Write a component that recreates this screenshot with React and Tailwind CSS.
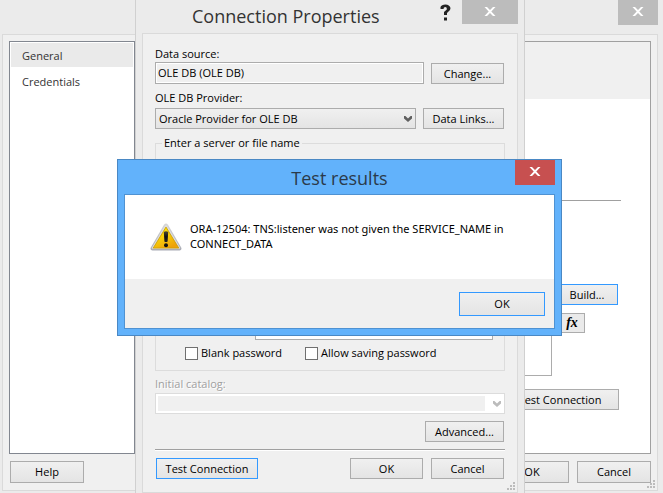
import React from "react";

const BUTTON =
  "border border-[#acacac] bg-linear-to-b from-[#f0f0f0] to-[#e4e4e4] text-center text-black";
const FOCUS_BUTTON =
  "border border-[#3399ff] bg-linear-to-b from-[#f0f0f0] to-[#e4e4e4] text-center text-black";

function CloseIcon() {
  return (
    <svg width="12" height="9" viewBox="0 0 12 9" aria-hidden="true">
      <path d="M0.5 0H3L6 3L9 0H11.5L7.3 4.5L11.5 9H9L6 6L3 9H0.5L4.7 4.5Z" fill="#fff" />
    </svg>
  );
}

function Chevron({ color }) {
  return (
    <svg width="8" height="6" viewBox="0 0 8 6" aria-hidden="true">
      <path d="M0 0H1.4L4 2.4L6.6 0H8V2.4L4 6L0 2.4Z" fill={color} />
    </svg>
  );
}

function Grip() {
  return (
    <svg width="8" height="8" viewBox="0 0 8 8" aria-hidden="true" fill="#bcbcbc">
      <path d="M6 0h2v2H6zM3 3h2v2H3zM6 3h2v2H6zM0 6h2v2H0zM3 6h2v2H3zM6 6h2v2H6z" />
    </svg>
  );
}

function WarningIcon() {
  return (
    <svg className="mt-0.5 shrink-0" width="32" height="28" viewBox="0 0 32 29" preserveAspectRatio="none" aria-hidden="true">
      <defs>
        <linearGradient id="rim" x1="0" y1="0" x2="0" y2="1">
          <stop offset="0" stopColor="#d6d6d6" />
          <stop offset="1" stopColor="#a9abb5" />
        </linearGradient>
        <linearGradient id="face" x1="0" y1="0" x2="0.6" y2="1">
          <stop offset="0" stopColor="#fff200" />
          <stop offset="0.5" stopColor="#f7d10a" />
          <stop offset="1" stopColor="#eea20a" />
        </linearGradient>
        <linearGradient id="mark" x1="0" y1="0" x2="0" y2="1">
          <stop offset="0" stopColor="#4a4630" />
          <stop offset="0.5" stopColor="#111" />
          <stop offset="1" stopColor="#222" />
        </linearGradient>
      </defs>
      <path d="M14 1.8Q16 -0.8 18 1.8L31.3 25.6Q32 28.3 29.5 28.5H2.5Q0 28.3 0.7 25.6Z" fill="url(#rim)" />
      <path d="M14.7 3Q16 1 17.3 3L30 25.4Q30.4 26.8 29 27H3Q1.6 26.8 2 25.4Z" fill="#dedede" />
      <path d="M16 4.2L28.8 26H3.2Z" fill="url(#face)" stroke="#c99a00" strokeWidth="0.8" strokeLinejoin="round" />
      <path d="M13.8 9.4Q16 7.8 18.2 9.4L17.6 19.2Q16 20.4 14.4 19.2Z" fill="url(#mark)" />
      <circle cx="16" cy="23" r="2" fill="#111" />
    </svg>
  );
}

function PropertiesWindow() {
  return (
    <main className="flex min-h-screen flex-col bg-[#ebebeb] pr-[5px] pb-0.5 pl-0.5">
      <header className="flex h-[34px] shrink-0 items-start justify-end">
        <button type="button" aria-label="Close window" className="flex h-[25px] w-10 items-center justify-center bg-[#bcbcbc] pb-0.5">
          <CloseIcon />
        </button>
      </header>
      <div className="flex flex-1 flex-col border border-[#dadada] bg-[#f0f0f0] px-1.5 pt-1.5">
        <div className="flex flex-1">
          <nav className="w-[126px] border border-[#828790] bg-white p-px text-[#333]">
            <button type="button" className="block h-6 w-full bg-[#eaeaea] pt-0.5 pl-[11px] text-left">General</button>
            <button type="button" className="mt-0.5 block h-6 w-full pt-0.5 pl-[11px] text-left">Credentials</button>
          </nav>
          <section className="ml-2 flex flex-1 flex-col border border-[#a0a0a0] bg-white">
            <div className="h-[57px] bg-[#f0f0f0]" />
            <div className="mr-[29px] ml-4 flex flex-col items-end pt-[101px]">
              <hr className="w-full border-t border-[#a0a0a0]" />
              <button type="button" className={`mt-[83px] mr-[3px] h-[21px] w-[74px] pl-3 ${FOCUS_BUTTON}`}>Build...</button>
              <div className="mt-2 mr-9 flex w-full items-start justify-end gap-[7px]">
                <textarea aria-label="Connection string" className="ml-9 h-[63px] flex-1 resize-none border border-[#acacac] bg-white" />
                <button
                  type="button"
                  aria-label="Expression"
                  className="flex h-5 w-[26px] items-center justify-center border border-[#acacac] bg-[#eaeaea] font-['Liberation_Serif',serif] text-sm leading-4 font-bold text-black italic"
                >
                  fx
                </button>
              </div>
              <button type="button" className={`mt-[13px] mr-0.5 h-[21px] w-[118px] ${BUTTON}`}>Test Connection</button>
            </div>
          </section>
        </div>
        <footer className="flex gap-2 pt-[7px] pb-[7px] pl-px">
          <button type="button" className={`mr-auto h-[22px] w-[74px] ${BUTTON}`}>Help</button>
          <button type="button" className={`h-[22px] w-[74px] ${BUTTON}`}>OK</button>
          <button type="button" className={`h-[22px] w-[74px] ${BUTTON}`}>Cancel</button>
        </footer>
        <div className="absolute right-2 bottom-[5px]">
          <Grip />
        </div>
      </div>
    </main>
  );
}

function ConnectionDialog() {
  return (
    <section aria-label="Connection Properties" className="absolute inset-y-0 left-[135px] flex w-[390px] flex-col border-x border-[#d0d0d0] bg-[#ebebeb] px-1.5">
      <header className="flex h-[33px] shrink-0 items-start">
        <h1 className="flex-1 pl-[50px] text-lg leading-8 text-[#333]">Connection Properties</h1>
        <button type="button" aria-label="Help" className="mr-2.5 h-6 w-3">
          <svg width="11" height="17" viewBox="0 0 11 17" aria-hidden="true">
            <path d="M0.5 5V3Q1.5 0.5 5.5 0.5T10.5 4Q10.5 6 8.5 7.5L7 9V11H4V8L6.8 5.5Q7.3 3 5.4 3T3.5 5ZM4 13.5H7V16.5H4Z" fill="#222" />
          </svg>
        </button>
        <button type="button" aria-label="Close dialog" className="flex h-6 w-14 items-center justify-center bg-[#bcbcbc] pb-0.5">
          <CloseIcon />
        </button>
      </header>
      <form className="relative flex flex-1 flex-col border border-[#dadada] bg-[#f0f0f0] px-3 pt-3">
        <label htmlFor="source" className="h-4 leading-4">Data source:</label>
        <div className="flex items-end gap-[7px] pr-px">
          <input id="source" readOnly defaultValue="OLE DB (OLE DB)" className="h-[22px] min-w-0 flex-1 border border-[#acacac] bg-[#f0f0f0] px-0.5 pb-0.5 inset-ring inset-ring-white" />
          <button type="button" className={`h-[21px] w-[73px] ${BUTTON}`}>Change...</button>
        </div>
        <label htmlFor="provider" className="mt-1.5 h-[18px] leading-4">OLE DB Provider:</label>
        <div className="flex gap-[7px] pr-px">
          <div className="grid flex-1 items-center">
            <select id="provider" className="col-start-1 row-start-1 h-[21px] w-full appearance-none border border-[#acacac] bg-linear-to-b from-[#f0f0f0] to-[#e4e4e4] px-[3px]">
              <option>Oracle Provider for OLE DB</option>
            </select>
            <span className="pointer-events-none col-start-1 row-start-1 mr-1 justify-self-end">
              <Chevron color="#606060" />
            </span>
          </div>
          <button type="button" className={`h-[21px] w-[81px] ${BUTTON}`}>Data Links...</button>
        </div>
        <fieldset className="mt-1.5 h-[236px] border border-[#dcdcdc] px-[11px]">
          <legend className="-ml-[5px] px-0.5 leading-4">Enter a server or file name</legend>
          <div className="flex h-[189px] items-end justify-end">
            <input type="password" aria-label="Password" className="h-[22px] w-[238px] border border-[#acacac] bg-white" />
          </div>
          <div className="mt-[5px] flex gap-[23px] pl-[18px]">
            <label className="flex items-center gap-[3px]">
              <input type="checkbox" className="size-[13px] appearance-none border border-[#707070] bg-white" />
              Blank password
            </label>
            <label className="flex items-center gap-[3px]">
              <input type="checkbox" className="size-[13px] appearance-none border border-[#707070] bg-white" />
              Allow saving password
            </label>
          </div>
        </fieldset>
        <label htmlFor="catalog" className="mt-[5px] h-[17px] leading-4 text-[#a0a0a0] text-shadow-[1px_1px_0_#fff]">Initial catalog:</label>
        <div className="grid items-center">
          <select id="catalog" disabled className="col-start-1 row-start-1 h-[21px] w-full appearance-none border border-[#dcdcdc] bg-white opacity-100" />
          <span className="col-start-1 row-start-1 mr-5 ml-[3px] h-[15px] bg-[#f0f0f0]" />
          <span className="col-start-1 row-start-1 mr-1 justify-self-end">
            <Chevron color="#bcbcbc" />
          </span>
        </div>
        <button type="button" className={`mt-[7px] mr-px h-[21px] w-[79px] self-end ${BUTTON}`}>Advanced...</button>
        <div className="mt-[7px] h-0.5 border-t border-[#a0a0a0] bg-white" />
        <div className="mt-[7px] flex gap-2 pr-px">
          <button type="button" className={`mr-auto ml-px h-[21px] w-[102px] ${FOCUS_BUTTON}`}>Test Connection</button>
          <button type="button" className={`h-[21px] w-[73px] ${BUTTON}`}>OK</button>
          <button type="button" className={`h-[21px] w-[73px] ${BUTTON}`}>Cancel</button>
        </div>
        <div className="absolute right-0.5 bottom-0.5">
          <Grip />
        </div>
      </form>
    </section>
  );
}

function TestResultsDialog() {
  return (
    <section role="alertdialog" aria-label="Test results" className="absolute top-[159px] left-[117px] flex h-[177px] w-[445px] flex-col border border-[#4a88c4] bg-[#62b2fb] px-1.5 pb-1.5">
      <header className="flex h-[34px] items-start">
        <h2 className="flex-1 pl-10 text-center text-lg leading-9 text-[#2b3a4a]">Test results</h2>
        <button type="button" aria-label="Close message" className="flex h-[25px] w-10 items-center justify-center bg-[#c75050] pb-0.5">
          <CloseIcon />
        </button>
      </header>
      <div className="flex flex-1 flex-col border border-[#4f92d2] bg-white">
        <div className="flex flex-1 items-start gap-2 pt-[26px] pl-[25px]">
          <WarningIcon />
          <p className="w-[350px] font-['Noto_Sans',sans-serif] leading-[15px]">
            ORA-12504: TNS:listener was not given the SERVICE_NAME in CONNECT_DATA
          </p>
        </div>
        <div className="flex h-[49px] items-center justify-end bg-[#f0f0f0] pr-[9px]">
          <button type="button" className={`h-6 w-[86px] ${FOCUS_BUTTON}`}>OK</button>
        </div>
      </div>
    </section>
  );
}

export default function App() {
  return (
    <div className="relative overflow-hidden font-['Open_Sans','Noto_Sans',sans-serif] text-[11px] leading-4 text-black">
      <PropertiesWindow />
      <ConnectionDialog />
      <TestResultsDialog />
    </div>
  );
}
